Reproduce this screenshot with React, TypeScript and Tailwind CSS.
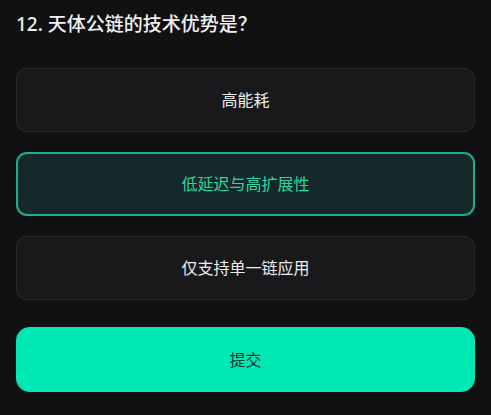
import React from "react";

const font = { fontFamily: '"Noto Sans", "Noto Sans CJK SC", sans-serif' };

export default function App() {
  const options = [
    { label: "高能耗", selected: false },
    { label: "低延迟与高扩展性", selected: true },
    { label: "仅支持单一链应用", selected: false },
  ];
  return (
    <div className="w-[491px] h-[415px] bg-[#111114] px-4 pt-[11px] overflow-hidden" style={font}>
      <div className="h-6 text-[19px] leading-[24px] text-[#f0f0f0] font-medium whitespace-nowrap">
        12. 天体公链的技术优势是<span style={{ fontFamily: '"Noto Sans CJK SC", sans-serif' }}>？</span>
      </div>
      <div className="mt-[33px] flex flex-col gap-5">
        {options.map((o) =>
          o.selected ? (
            <div
              key={o.label}
              className="h-16 rounded-[11px] border-2 border-[#1fae84] bg-[#16292a] flex items-center justify-center text-[16px] text-[#2bd7a2]"
            >
              {o.label}
            </div>
          ) : (
            <div
              key={o.label}
              className="h-16 rounded-[11px] border border-[#2a2a2d] bg-[#19191b] flex items-center justify-center text-[16px] text-[#ececec]"
            >
              {o.label}
            </div>
          )
        )}
      </div>
      <div className="mt-[27px] h-[65px] rounded-[14px] bg-[#00e8b4] flex items-center justify-center text-[16px] text-[#0f3a2e]">
        提交
      </div>
    </div>
  );
}
